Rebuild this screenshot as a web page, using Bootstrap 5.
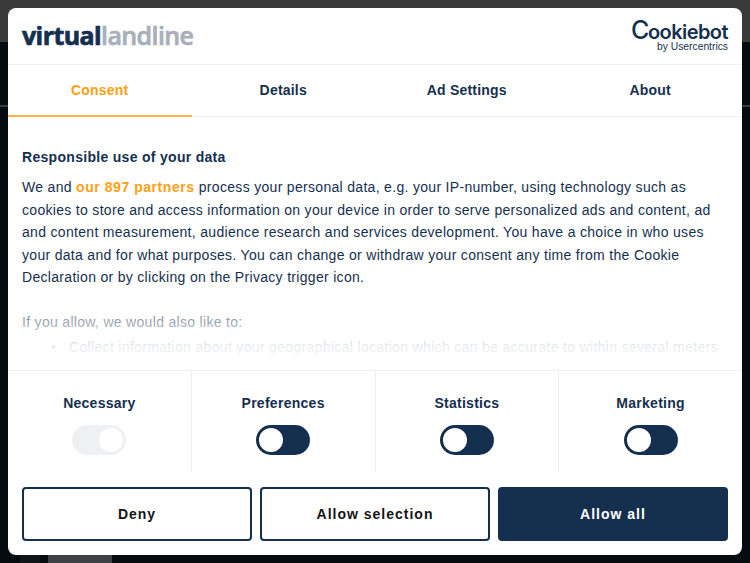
<!DOCTYPE html>
<html lang="en">
<head>
    <meta charset="UTF-8">
    <meta name="viewport" content="width=device-width, initial-scale=1.0">
    <title>Cookie consent</title>
    <link href="https://cdn.jsdelivr.net/npm/bootstrap@5.3.0/dist/css/bootstrap.min.css" rel="stylesheet">
    <style>
        html, body { height: 100%; }
        body {
            font-family: "Liberation Sans", Arial, sans-serif;
            color: #15304f;
            overflow: hidden;
            background: linear-gradient(#3a3a3a 0, #3a3a3a 42px, #060b12 42px, #060b12 105px, #3a3a3a 105px, #3a3a3a 107px, #060b12 107px);
            padding: 8px;
        }
        .consent-box {
            width: 734px;
            height: 547px;
            background: #fff;
            border-radius: 8px;
            overflow: hidden;
        }
        .box-head {
            height: 57px;
            padding: 0 14px;
            border-bottom: 1px solid #eceef0;
        }
        .brand-vl {
            font-family: "Open Sans", sans-serif;
            font-weight: 700;
            font-size: 25px;
            letter-spacing: -.6px;
            line-height: 1;
            color: #15304f;
            margin-top: -2px;
            -webkit-text-stroke: .7px currentColor;
        }
        .brand-vl span { color: #a8afba; font-weight: 600; }
        .brand-cb { color: #15304f; }
        .brand-cb-name {
            font-family: "Inter", sans-serif;
            font-size: 20px;
            font-weight: 600;
            letter-spacing: -.55px;
            line-height: 18px;
        }
        .brand-cb-name span { font-size: 25px; font-weight: 500; letter-spacing: -1.5px; line-height: 18px; }
        .brand-cb-by { font-size: 10.3px; line-height: 11px; }
        .tab-row { height: 52px; border-bottom: 1px solid #f1f2f3; }
        .tab-row .nav-link {
            flex: 1 1 0;
            height: 52px;
            line-height: 50px;
            padding: 0;
            text-align: center;
            font-size: 14px;
            font-weight: 700;
            letter-spacing: .2px;
            color: #15304f;
            border-bottom: 2px solid transparent;
        }
        .tab-row .nav-link.active { color: #ffa014; border-bottom-color: #ffb14d; }
        .text-pane {
            height: 253px;
            padding: 30px 14px 0;
            font-size: 14px;
            line-height: 22.5px;
            letter-spacing: .31px;
            overflow: hidden;
        }
        .text-pane h2 {
            font-size: 14px;
            font-weight: 700;
            line-height: 20px;
            letter-spacing: .3px;
            margin-bottom: 9px;
        }
        .text-pane p { margin-bottom: 22px; }
        .text-pane ul { padding-left: 47px; margin-top: 3px; list-style-type: "•\00a0\00a0\00a0"; }
        .text-pane li { letter-spacing: .33px; }
        .partner-link { color: #ffa014; font-weight: 700; letter-spacing: .55px; }
        .pane-fade {
            left: 0;
            right: 0;
            bottom: 0;
            height: 84px;
            background: linear-gradient(rgba(255,255,255,0), rgba(255,255,255,.55) 42%, rgba(255,255,255,.9) 72%, #fff 100%);
        }
        .toggle-row { height: 102px; border-top: 1px solid #f1f2f3; }
        .toggle-col {
            flex: 1 1 0;
            padding-top: 22px;
            font-size: 14px;
            font-weight: 700;
            letter-spacing: .27px;
            line-height: 20px;
            border-right: 1px solid #eceef0;
        }
        .toggle-col:last-child { border-right: 0; }
        .slide-toggle {
            width: 54px;
            height: 30px;
            margin-top: 12px;
            padding: 3px;
            border-radius: 15px;
            background: #15304f;
        }
        .slide-toggle i { width: 24px; height: 24px; border-radius: 50%; background: #fff; }
        .slide-toggle.locked { background: #eef0f1; }
        .btn-row { padding: 15px 14px 0; gap: 8px; }
        .btn-row .btn {
            flex: 1 1 0;
            height: 54px;
            border: 2px solid #15304f;
            border-radius: 4px;
            font-size: 14px;
            font-weight: 700;
            letter-spacing: 1px;
            color: #141414;
            background: #fff;
        }
        .btn-row .btn.btn-fill { background: #15304f; color: #fff; }
        .under-strip { height: 8px; padding-left: 12px; gap: 8px; }
        .under-strip div { width: 20px; background: #10151c; }
        .under-strip div + div { width: 64px; background: #3d4044; }
    </style>
</head>
<body>
    <div class="consent-box d-flex flex-column">
        <div class="box-head d-flex justify-content-between align-items-center">
            <div class="brand-vl">virtual<span>landline</span></div>
            <div class="brand-cb text-end">
                <div class="brand-cb-name"><span>C</span>ookiebot</div>
                <div class="brand-cb-by">by Usercentrics</div>
            </div>
        </div>

        <nav class="nav tab-row">
            <a class="nav-link active" href="#">Consent</a>
            <a class="nav-link" href="#">Details</a>
            <a class="nav-link" href="#">Ad Settings</a>
            <a class="nav-link" href="#">About</a>
        </nav>

        <div class="text-pane position-relative">
            <h2>Responsible use of your data</h2>
            <p>We and <span class="partner-link">our 897 partners</span> process your personal data, e.g. your IP-number, using technology such as cookies to store and access information on your device in order to serve personalized ads and content, ad and content measurement, audience research and services development. You have a choice in who uses your data and for what purposes. You can change or withdraw your consent any time from the Cookie Declaration or by clicking on the Privacy trigger icon.</p>
            <div>If you allow, we would also like to:</div>
            <ul>
                <li>Collect information about your geographical location which can be accurate to within several meters</li>
            </ul>
            <div class="pane-fade position-absolute"></div>
        </div>

        <div class="toggle-row d-flex">
            <div class="toggle-col d-flex flex-column align-items-center">
                Necessary
                <div class="slide-toggle locked d-flex justify-content-end"><i></i></div>
            </div>
            <div class="toggle-col d-flex flex-column align-items-center">
                Preferences
                <div class="slide-toggle d-flex"><i></i></div>
            </div>
            <div class="toggle-col d-flex flex-column align-items-center">
                Statistics
                <div class="slide-toggle d-flex"><i></i></div>
            </div>
            <div class="toggle-col d-flex flex-column align-items-center">
                Marketing
                <div class="slide-toggle d-flex"><i></i></div>
            </div>
        </div>

        <div class="btn-row d-flex">
            <button type="button" class="btn">Deny</button>
            <button type="button" class="btn">Allow selection</button>
            <button type="button" class="btn btn-fill">Allow all</button>
        </div>
    </div>
    <div class="under-strip d-flex"><div></div><div></div></div>

    <script src="https://cdn.jsdelivr.net/npm/bootstrap@5.3.0/dist/js/bootstrap.bundle.min.js"></script>
</body>
</html>
